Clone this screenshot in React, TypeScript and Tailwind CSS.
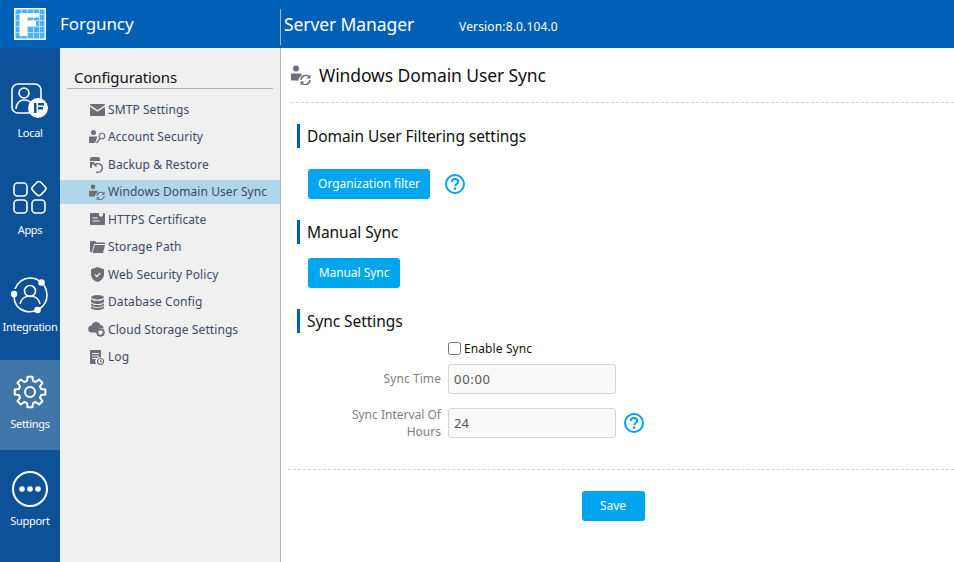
import type { ReactNode } from 'react';

const font = { fontFamily: '"Noto Sans", sans-serif' };

function Logo() {
  return (
    <svg width="32" height="32" viewBox="0 0 32 32">
      <rect width="32" height="32" fill="#fff" />
      <rect x="1.500" y="1.500" width="29" height="29" fill="#4db2f2" />
      <path d="M1.500 6.500h29M1.500 12.500h29M1.500 18.500h29M1.500 24.500h29M7.500 1.500v29M13.500 1.500v29M19.500 1.500v29M25.500 1.500v29" stroke="#b5e0fa" strokeWidth="1" />
      <path d="M5.500 5H25v4.500H13V13h9v5h-9v10H5.500z" fill="#fff" />
    </svg>
  );
}

function RailItem({ label, active, icon }: { label: string; active?: boolean; icon: ReactNode }) {
  return (
    <div className={`h-[90px] flex flex-col items-center pt-[14px] ${active ? 'bg-[#3f76aa]' : ''}`}>
      <div className="h-9 w-10 flex items-center justify-center">{icon}</div>
      <span className="mt-[6px] text-[11px] leading-4 text-white tracking-[-0.3px]">{label}</span>
    </div>
  );
}

const railStroke = { fill: 'none', stroke: '#fff', strokeWidth: 1.6 };

function LocalIcon() {
  return (
    <svg width="38" height="36" viewBox="0 0 38 36">
      <rect x="1" y="1" width="29" height="29" rx="6" {...railStroke} />
      <circle cx="13" cy="10" r="5" {...railStroke} />
      <path d="M5 26c0-6 4-9 8-9s7 2 8 5" {...railStroke} />
      <circle cx="27" cy="25" r="10" fill="#fff" />
      <path d="M23 20h2.500v10H23zM27 20h6v2.500h-6zM27 24h5v2.500h-5z" fill="#0d5298" />
    </svg>
  );
}

function AppsIcon() {
  return (
    <svg width="34" height="34" viewBox="0 0 34 34" {...railStroke}>
      <rect x="1" y="2" width="13" height="13" rx="3.500" />
      <rect x="19.500" y="1.500" width="11.500" height="11.500" rx="3" transform="rotate(45 25.2 8.2)" />
      <rect x="1" y="19" width="13" height="13" rx="3.500" />
      <rect x="19" y="19" width="13" height="13" rx="3.500" />
    </svg>
  );
}

function IntegrationIcon() {
  return (
    <svg width="38" height="38" viewBox="0 0 38 38" {...railStroke}>
      <path d="M4 13C7 6 12 2 19 2c4 0 7 1 9 3" />
      <path d="M33 9c2 3 3 6 3 10 0 6-3 11-8 14" />
      <path d="M24 35c-7 2-14 0-18-5-2-3-3-6-3-9" />
      <circle cx="19" cy="15" r="5.500" />
      <path d="M9 28c1-5 5-8 10-8s9 3 10 8" />
      <circle cx="30.500" cy="6.500" r="2.500" fill="#fff" />
      <circle cx="3" cy="18" r="2.500" fill="#fff" />
      <circle cx="26.500" cy="34" r="2.500" fill="#fff" />
    </svg>
  );
}

const gearPath =
  Array.from({ length: 8 }, (_, i) => {
    const pt = (deg: number, r: number) => {
      const a = ((i * 45 + deg - 90) * Math.PI) / 180;
      return `${(17 + r * Math.cos(a)).toFixed(2)} ${(17 + r * Math.sin(a)).toFixed(2)}`;
    };
    return `${i === 0 ? 'M' : 'L'}${pt(-15, 11.5)}L${pt(-9, 15.5)}L${pt(9, 15.5)}L${pt(15, 11.5)}`;
  }).join('') + 'Z';

function GearIcon() {
  return (
    <svg width="34" height="34" viewBox="0 0 34 34" fill="none" stroke="#fff" strokeWidth="2" strokeLinejoin="round">
      <circle cx="17" cy="17" r="5" />
      <path d={gearPath} />
    </svg>
  );
}

function SupportIcon() {
  return (
    <svg width="38" height="38" viewBox="0 0 38 38">
      <circle cx="19" cy="19" r="17" fill="none" stroke="#fff" strokeWidth="2" />
      <circle cx="11" cy="19" r="2.800" fill="#fff" />
      <circle cx="19" cy="19" r="2.800" fill="#fff" />
      <circle cx="27" cy="19" r="2.800" fill="#fff" />
    </svg>
  );
}

function SyncUsers({ size = 16 }: { size?: number }) {
  return (
    <svg width={size} height={size} viewBox="0 0 20 20">
      <circle cx="5" cy="3.500" r="3" fill="#6d6e78" />
      <path d="M0 8.500h9.500c.5 0 1 .3 1 1v1.500c-2 1-3 2.500-3 4.500H1c-.6 0-1-.4-1-1z" fill="#6d6e78" />
      <path d="M10 15a4.800 4.800 0 0 1 8.200-3.200M19 15a4.800 4.800 0 0 1-8.200 3.200" fill="none" stroke="#6d6e78" strokeWidth="1.500" />
      <path d="M19.500 9.500v4h-4zM9.500 20.500v-4h4z" fill="#6d6e78" />
    </svg>
  );
}

const gray = '#6d6e78';

const menuIcons: Record<string, ReactNode> = {
  smtp: (
    <svg width="15" height="12" viewBox="0 0 15 12">
      <path d="M0 1c0-.6.4-1 1-1h13c.6 0 1 .4 1 1L7.500 6z" fill={gray} />
      <path d="M0 2.800l7.500 5 7.500-5V11c0 .6-.4 1-1 1H1c-.6 0-1-.4-1-1z" fill={gray} />
    </svg>
  ),
  account: (
    <svg width="17" height="14" viewBox="0 0 17 14">
      <circle cx="4.500" cy="2.500" r="2.500" fill={gray} />
      <path d="M0 6.500h8.500L7 10.500 6 13H1c-.6 0-1-.4-1-1z" fill={gray} />
      <path d="M7.500 13l3.500-4.500" stroke={gray} strokeWidth="1.300" fill="none" />
      <circle cx="13" cy="6" r="2.800" fill="none" stroke={gray} strokeWidth="1.100" />
    </svg>
  ),
  backup: (
    <svg width="16" height="16" viewBox="0 0 16 16">
      <path d="M1 2c0-1 .8-2 2-2h6c1 0 2 1 2 2v2H1z" fill={gray} />
      <path d="M1 5h5L3 8v3H2c-.6 0-1-.4-1-1z" fill={gray} />
      <path d="M5.500 8.500a4.300 4.300 0 1 1 1.500 6.300" fill="none" stroke={gray} strokeWidth="1.500" />
      <path d="M3 6.500h4.500v4z" fill={gray} />
    </svg>
  ),
  https: (
    <svg width="15" height="13" viewBox="0 0 15 13">
      <path d="M0 1c0-.6.4-1 1-1h8v2.500l2 1.500 2-1.500V0h1c.6 0 1 .4 1 1v10c0 .6-.4 1-1 1H1c-.6 0-1-.4-1-1z" fill={gray} />
      <path d="M2.500 5h5M2.500 8h7" stroke="#f0f0f0" strokeWidth="1.200" />
    </svg>
  ),
  storage: (
    <svg width="15" height="12" viewBox="0 0 15 12">
      <path d="M0 1c0-.6.4-1 1-1h4l1.500 1.500H14c.6 0 1 .4 1 1V3H4L2 11H1c-.6 0-1-.4-1-1z" fill={gray} />
      <path d="M4.800 4H15l-2 8H2.500z" fill={gray} />
    </svg>
  ),
  web: (
    <svg width="13" height="15" viewBox="0 0 13 15">
      <path d="M6.500 0L13 2.200V7c0 4-3 7-6.500 8C3 14 0 11 0 7V2.200z" fill={gray} />
      <path d="M4 7.500l2 2 3.200-3.500" fill="none" stroke="#f0f0f0" strokeWidth="1.300" />
    </svg>
  ),
  database: (
    <svg width="13" height="15" viewBox="0 0 13 15">
      <ellipse cx="6.500" cy="2.200" rx="6.500" ry="2.200" fill={gray} />
      <path d="M0 4c1 1.300 3.500 1.800 6.500 1.800S12 5.300 13 4v2.500C13 8 10 9 6.500 9S0 8 0 6.500zM0 8.200c1 1.300 3.500 1.800 6.500 1.800S12 9.500 13 8.200v1.300c0 1.500-3 2.500-6.500 2.500S0 11 0 9.500zM0 11c1 1.300 3.500 1.800 6.500 1.800S12 12.300 13 11v1.500c0 1.500-3 2.500-6.500 2.500S0 14 0 12.500z" fill={gray} />
    </svg>
  ),
  cloud: (
    <svg width="18" height="15" viewBox="0 0 18 15">
      <path d="M4 10.500a3.500 3.500 0 0 1-.5-7A4.800 4.800 0 0 1 12.500 3a3.500 3.500 0 0 1 3 3.500c-3-1.500-6.500 0-7 4z" fill={gray} />
      <circle cx="12.500" cy="10.500" r="3.200" fill="none" stroke={gray} strokeWidth="1.800" />
      <path d="M12.500 6.300v1M12.500 13.700v1M8.300 10.500h1M15.700 10.500h1M9.500 7.500l.7.700M14.800 12.800l.7.700M15.500 7.500l-.7.700M10.200 12.800l-.7.700" stroke={gray} strokeWidth="1.400" />
    </svg>
  ),
  log: (
    <svg width="14" height="15" viewBox="0 0 14 15">
      <path d="M0 1c0-.6.4-1 1-1h9c.6 0 1 .4 1 1v6.500a4 4 0 0 0-4.500 6.500H1c-.6 0-1-.4-1-1z" fill={gray} />
      <path d="M2 3.500h7M2 6h7M2 8.500h4" stroke="#f0f0f0" strokeWidth="1.100" />
      <circle cx="10.500" cy="11.500" r="3" fill="none" stroke={gray} strokeWidth="1.200" />
      <path d="M10.500 10v1.700h1.500" fill="none" stroke={gray} strokeWidth="1" />
    </svg>
  ),
  sync: <SyncUsers size={16} />,
};

const menu = [
  { icon: 'smtp', label: 'SMTP Settings' },
  { icon: 'account', label: 'Account Security' },
  { icon: 'backup', label: 'Backup & Restore' },
  { icon: 'sync', label: 'Windows Domain User Sync', active: true },
  { icon: 'https', label: 'HTTPS Certificate' },
  { icon: 'storage', label: 'Storage Path' },
  { icon: 'web', label: 'Web Security Policy' },
  { icon: 'database', label: 'Database Config' },
  { icon: 'cloud', label: 'Cloud Storage Settings' },
  { icon: 'log', label: 'Log' },
];

function Help() {
  return (
    <svg width="20" height="20" viewBox="0 0 20 20">
      <circle cx="10" cy="10" r="9" fill="none" stroke="#00a2e8" strokeWidth="2" />
      <path d="M6.800 7.800C7 5.800 8.300 5 10 5c1.900 0 3.200 1 3.200 2.700 0 2.300-3 2.400-3 4.600" fill="none" stroke="#00a2e8" strokeWidth="2" />
      <rect x="9" y="13.500" width="2.300" height="2.300" fill="#00a2e8" />
    </svg>
  );
}

function SectionTitle({ children }: { children: ReactNode }) {
  return (
    <h2 className="ml-[6px] border-l-[3px] border-[#0060b5] pl-[7px] h-6 leading-6 text-[15.500px] text-[#111] tracking-[-0.07px]">
      {children}
    </h2>
  );
}

function BlueButton({ children, className }: { children: ReactNode; className: string }) {
  return (
    <button className={`h-[30px] rounded-[3px] bg-[#00a6ed] text-white text-xs tracking-[-0.05px] ${className}`}>
      {children}
    </button>
  );
}

export default function App() {
  return (
    <div className="w-[954px] h-[562px] overflow-hidden flex flex-col bg-white" style={font}>
      {/* Header */}
      <header className="h-12 shrink-0 bg-[#0060b5] flex items-center text-white">
        <div className="w-[281px] h-full shrink-0 flex items-center pl-[14px]">
          <Logo />
          <span className="ml-[14px] text-[17px] tracking-[-0.1px]">Forguncy</span>
          <span className="ml-auto w-px h-9 mt-[6px] bg-[#9db8d2]" />
        </div>
        <span className="ml-[3px] text-[17.500px] tracking-[-0.1px]">Server Manager</span>
        <span className="ml-[45px] mt-[6px] text-xs tracking-[0.15px]">Version:8.0.104.0</span>
      </header>

      <div className="flex flex-1 min-h-0">
        {/* Left rail */}
        <nav className="w-[60px] shrink-0 bg-[#0d5298] pt-[21px] flex flex-col gap-[7px]">
          <RailItem label="Local" icon={<LocalIcon />} />
          <RailItem label="Apps" icon={<AppsIcon />} />
          <RailItem label="Integration" icon={<IntegrationIcon />} />
          <RailItem label="Settings" active icon={<GearIcon />} />
          <RailItem label="Support" icon={<SupportIcon />} />
        </nav>

        {/* Configurations menu */}
        <aside className="w-[221px] shrink-0 bg-[#f0f0f0] border-r border-[#a9b4bf] pt-[19px]">
          <div className="mx-[7px] w-[206px] h-[22px] pl-[7px] border-b border-[#a9b4bf] text-[15px] leading-5 text-[#111] tracking-[-0.1px]">
            Configurations
          </div>
          <ul className="mt-[8.900px] flex flex-col gap-[3.500px]">
            {menu.map((m) => (
              <li
                key={m.label}
                className={`h-6 flex items-center pl-[28px] text-xs tracking-[0.08px] text-[#3c4a66] ${m.active ? 'bg-[#b0d7e9]' : ''}`}
              >
                <span className="w-5 flex justify-center shrink-0 -ml-[1px] mr-[1px]">{menuIcons[m.icon]}</span>
                {m.label}
              </li>
            ))}
          </ul>
        </aside>

        {/* Content */}
        <main className="flex-1 min-w-0">
          <div className="ml-[10px] h-[55px] border-b border-dashed border-[#cfcfcf] flex items-center">
            <SyncUsers size={20} />
            <h1 className="ml-[8px] text-[17.500px] text-[#111] tracking-[-0.1px]">Windows Domain User Sync</h1>
          </div>

          <div className="ml-[10px] pt-[21px]">
            <SectionTitle>Domain User Filtering settings</SectionTitle>
            <div className="mt-[21px] ml-[17px] flex items-center">
              <BlueButton className="w-[122px]">Organization filter</BlueButton>
              <span className="ml-[15px]">
                <Help />
              </span>
            </div>

            <div className="mt-[21px]">
              <SectionTitle>Manual Sync</SectionTitle>
            </div>
            <div className="mt-[14px] ml-[17px]">
              <BlueButton className="w-[92px]">Manual Sync</BlueButton>
            </div>

            <div className="mt-[21px]">
              <SectionTitle>Sync Settings</SectionTitle>
            </div>

            <div className="ml-[157px] mt-[7px] h-[18px] flex items-center text-xs text-[#111] tracking-[0.1px]">
              <input type="checkbox" className="w-[13px] h-[13px] mr-[3px] -mt-[2px]" />
              Enable Sync
            </div>

            <div className="mt-[6px] flex items-center">
              <label className="w-[150px] text-right text-xs text-[#7c7f85] tracking-[0.08px]">Sync Time</label>
              <input
                readOnly
                value="00:00"
                className="ml-[7px] w-[168px] h-[30px] px-[5px] rounded-[3px] border border-[#d5d5d5] bg-[#f9f9f9] text-[13px] tracking-[0.7px] text-[#555]"
              />
            </div>

            <div className="mt-[12px] flex items-center">
              <label className="w-[150px] text-right text-xs leading-[17px] text-[#7c7f85]">
                Sync Interval Of
                <br />
                Hours
              </label>
              <input
                readOnly
                value="24"
                className="ml-[7px] w-[168px] h-[30px] px-[5px] rounded-[3px] border border-[#d5d5d5] bg-[#f9f9f9] text-[13px] text-[#555]"
              />
              <span className="ml-[8px]">
                <Help />
              </span>
            </div>
          </div>

          <div className="ml-[7px] mt-[29px] border-t border-dashed border-[#cfcfcf] flex justify-center pt-[21px]">
            <BlueButton className="w-[63px] -ml-[16px]">Save</BlueButton>
          </div>
        </main>
      </div>
    </div>
  );
}
